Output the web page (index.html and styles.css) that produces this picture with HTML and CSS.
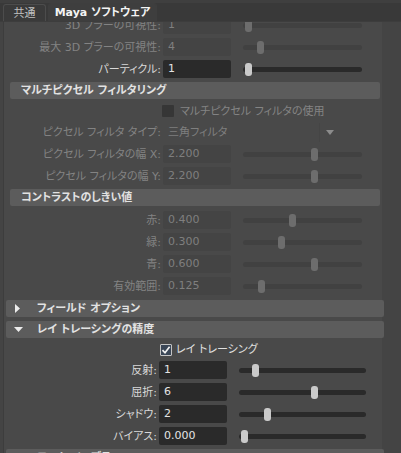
FILE: index.html
```html
<!DOCTYPE html>
<html lang="ja">
<head>
<meta charset="utf-8">
<link rel="stylesheet" href="styles.css">
</head>
<body>
<div class="app">
  <div class="tabs">
    <div class="tab">共通</div>
    <div class="tab active">Maya ソフトウェア</div>
  </div>
  <div class="panel">
    <div class="content">
      <div class="sec-in">
        <div class="row">
          <div class="lbl">3D ブラーの可視性:</div>
          <div class="fld">1</div>
          <div class="slider"><div class="track"></div><div class="thumb" style="margin-left:2px"></div></div>
        </div>
        <div class="row">
          <div class="lbl">最大 3D ブラーの可視性:</div>
          <div class="fld">4</div>
          <div class="slider"><div class="track"></div><div class="thumb" style="margin-left:14px"></div></div>
        </div>
        <div class="row on">
          <div class="lbl">パーティクル:</div>
          <div class="fld">1</div>
          <div class="slider"><div class="track"></div><div class="thumb" style="margin-left:2px"></div></div>
        </div>
        <div class="hdr">マルチピクセル フィルタリング</div>
        <div class="chkrow">
          <div class="chk"></div>
          <div class="chklbl">マルチピクセル フィルタの使用</div>
        </div>
        <div class="row">
          <div class="lbl">ピクセル フィルタ タイプ:</div>
          <div class="dd">
            <span class="ddtext">三角フィルタ</span>
            <span class="ddbtn"><svg width="8" height="5" viewBox="0 0 8 5"><path d="M0 0H8L4 5Z" fill="#8c8c8c"/></svg></span>
          </div>
        </div>
        <div class="row">
          <div class="lbl">ピクセル フィルタの幅 X:</div>
          <div class="fld">2.200</div>
          <div class="slider"><div class="track"></div><div class="thumb" style="margin-left:68px"></div></div>
        </div>
        <div class="row">
          <div class="lbl">ピクセル フィルタの幅 Y:</div>
          <div class="fld">2.200</div>
          <div class="slider"><div class="track"></div><div class="thumb" style="margin-left:68px"></div></div>
        </div>
        <div class="hdr hdr-gap">コントラストのしきい値</div>
        <div class="row">
          <div class="lbl">赤:</div>
          <div class="fld">0.400</div>
          <div class="slider"><div class="track"></div><div class="thumb" style="margin-left:46px"></div></div>
        </div>
        <div class="row">
          <div class="lbl">緑:</div>
          <div class="fld">0.300</div>
          <div class="slider"><div class="track"></div><div class="thumb" style="margin-left:35px"></div></div>
        </div>
        <div class="row">
          <div class="lbl">青:</div>
          <div class="fld">0.600</div>
          <div class="slider"><div class="track"></div><div class="thumb" style="margin-left:68px"></div></div>
        </div>
        <div class="row">
          <div class="lbl">有効範囲:</div>
          <div class="fld">0.125</div>
          <div class="slider"><div class="track"></div><div class="thumb" style="margin-left:15px"></div></div>
        </div>
      </div>
      <div class="sec-out">
        <div class="hdr fold">
          <span class="caret"><svg width="6" height="9" viewBox="0 0 6 9"><path d="M1 0L6 4.5L1 9Z" fill="#ececec"/></svg></span>
          フィールド オプション
        </div>
        <div class="hdr fold">
          <span class="caret"><svg width="9" height="5" viewBox="0 0 9 5"><path d="M0 0H9L4.5 5Z" fill="#ececec"/></svg></span>
          レイ トレーシングの精度
        </div>
        <div class="chkrow out">
          <div class="chk on"><svg width="10" height="10" viewBox="0 0 10 10"><path d="M1.5 5.2L4 7.8L8.6 1.8" fill="none" stroke="#f2f2f2" stroke-width="1.7"/></svg></div>
          <div class="chklbl on">レイ トレーシング</div>
        </div>
        <div class="row on">
          <div class="lbl">反射:</div>
          <div class="fld">1</div>
          <div class="slider"><div class="track"></div><div class="thumb" style="margin-left:13px"></div></div>
        </div>
        <div class="row on">
          <div class="lbl">屈折:</div>
          <div class="fld">6</div>
          <div class="slider"><div class="track"></div><div class="thumb" style="margin-left:72px"></div></div>
        </div>
        <div class="row on">
          <div class="lbl">シャドウ:</div>
          <div class="fld">2</div>
          <div class="slider"><div class="track"></div><div class="thumb" style="margin-left:25px"></div></div>
        </div>
        <div class="row on">
          <div class="lbl">バイアス:</div>
          <div class="fld">0.000</div>
          <div class="slider"><div class="track"></div><div class="thumb" style="margin-left:2px"></div></div>
        </div>
        <div class="hdr fold">
          <span class="caret"><svg width="6" height="9" viewBox="0 0 6 9"><path d="M1 0L6 4.5L1 9Z" fill="#ececec"/></svg></span>
          モーション ブラー
        </div>
      </div>
    </div>
  </div>
</div>
</body>
</html>
```

FILE: styles.css
```css
body {
  margin: 0;
  background: #494949;
  font-family: "DejaVu Sans", "Noto Sans CJK JP", sans-serif;
  font-size: 11px;
  line-height: 1;
  font-feature-settings: "palt";
}

.app {
  width: 401px;
  height: 453px;
  overflow: hidden;
  display: flex;
  flex-direction: column;
}

.tabs {
  flex: none;
  height: 18px;
  padding: 3px 0 0 3px;
  display: flex;
  align-items: flex-end;
  gap: 2px;
  background: linear-gradient(#3f3f3f 0 3px, #393939 3px);
  border-bottom: 1px solid #3d3d3d;
}

.tab {
  box-sizing: border-box;
  width: 43px;
  height: 17px;
  border: 1px solid #4c4c4c;
  border-bottom: none;
  border-radius: 3px 3px 0 0;
  background: #3a3a3a;
  color: #c0c0c0;
  display: flex;
  align-items: center;
  justify-content: center;
}

.tab.active {
  width: 109px;
  height: 18px;
  background: #3e3e3e;
  border-color: #3e3e3e;
  color: #f4f4f4;
  font-weight: bold;
}

.panel {
  flex: 1;
  overflow: hidden;
  background: linear-gradient(to right, #444 0 3px, #3d3d3d 3px 4px, #494949 4px 382px, #444 382px);
}

.content {
  margin-top: -6px;
  display: flex;
  flex-direction: column;
}

.sec-in {
  display: flex;
  flex-direction: column;
  gap: 4px;
  margin-left: 10px;
  width: 370px;
}

.sec-out {
  margin-top: 5px;
  display: flex;
  flex-direction: column;
  gap: 4px;
  margin-left: 6px;
  width: 378px;
}

.row {
  display: flex;
  align-items: center;
  height: 18px;
  flex: none;
}

.lbl {
  width: 151px;
  margin-right: 2px;
  text-align: right;
  white-space: nowrap;
  color: #838383;
}

.row.on .lbl {
  color: #d8d8d8;
}

.fld {
  box-sizing: border-box;
  width: 68px;
  height: 18px;
  line-height: 18px;
  padding-left: 5px;
  border-radius: 2px;
  background: #444;
  color: #7f7f7f;
}

.row.on .fld {
  background: #2a2a2a;
  color: #e4e4e4;
}

.slider {
  margin-left: 12px;
  width: 119px;
  height: 18px;
  display: grid;
  align-items: center;
}

.sec-out .slider {
  width: 127px;
}

.track,
.thumb {
  grid-area: 1 / 1;
}

.track {
  height: 5px;
  border-radius: 3px;
  background: #414141;
}

.thumb {
  justify-self: start;
  width: 7px;
  height: 13px;
  border-radius: 3px;
  background: #6d6d6d;
}

.row.on .track {
  background: #2a2a2a;
}

.row.on .thumb {
  background: #cacaca;
}

.hdr {
  flex: none;
  height: 17px;
  border-radius: 2px;
  background: #5c5c5c;
  color: #e2e2e2;
  font-weight: bold;
  display: flex;
  align-items: center;
  padding-left: 11px;
  white-space: nowrap;
}

.hdr-gap {
  margin-bottom: 1px;
}

.hdr.fold {
  padding-left: 8px;
}

.caret {
  width: 23px;
  display: flex;
  align-items: center;
}

.chkrow {
  flex: none;
  height: 16px;
  display: flex;
  align-items: center;
  padding-left: 152px;
}

.chkrow.out {
  height: 15px;
  padding-left: 154px;
}

.chk {
  box-sizing: border-box;
  width: 12px;
  height: 12px;
  border-radius: 1px;
  background: #363636;
  display: flex;
  align-items: center;
  justify-content: center;
}

.chk.on {
  background: #3a4656;
  border: 1px solid #c4c4c4;
}

.chklbl {
  margin-left: 6px;
  color: #848484;
  white-space: nowrap;
}

.chklbl.on {
  margin-left: 4px;
  color: #e0e0e0;
}

.dd {
  width: 176px;
  height: 19px;
  display: flex;
  align-items: center;
  justify-content: space-between;
  color: #7f7f7f;
}

.ddtext {
  padding-left: 5px;
}

.ddbtn {
  box-sizing: border-box;
  width: 20px;
  height: 19px;
  border-left: 1px solid #454545;
  display: flex;
  align-items: center;
  justify-content: center;
}
```
